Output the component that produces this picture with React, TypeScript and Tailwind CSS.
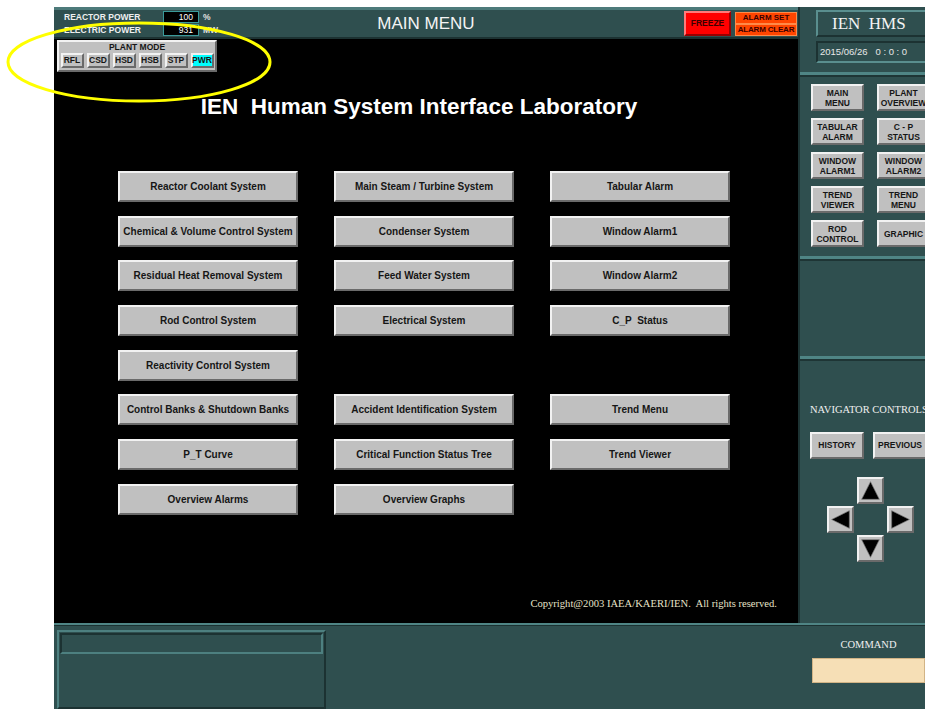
import React from "react";

const sans = "font-['Liberation_Sans',Arial,sans-serif]";
const serif = "font-['Liberation_Serif','Times_New_Roman',serif]";

const raised =
  "border-2 border-t-[#f2f2f2] border-l-[#f2f2f2] border-r-[#6a6a6a] border-b-[#6a6a6a] bg-[#c0c0c0]";

const menuRows: string[][] = [
  ["Reactor Coolant System", "Main Steam / Turbine System", "Tabular Alarm"],
  ["Chemical & Volume Control System", "Condenser System", "Window Alarm1"],
  ["Residual Heat Removal System", "Feed Water System", "Window Alarm2"],
  ["Rod Control System", "Electrical System", "C_P  Status"],
  ["Reactivity Control System", "", ""],
  ["Control Banks & Shutdown Banks", "Accident Identification System", "Trend Menu"],
  ["P_T Curve", "Critical Function Status Tree", "Trend Viewer"],
  ["Overview Alarms", "Overview Graphs", ""],
];

const sideButtons: [string, string][] = [
  ["MAIN", "MENU"],
  ["PLANT", "OVERVIEW"],
  ["TABULAR", "ALARM"],
  ["C - P", "STATUS"],
  ["WINDOW", "ALARM1"],
  ["WINDOW", "ALARM2"],
  ["TREND", "VIEWER"],
  ["TREND", "MENU"],
  ["ROD", "CONTROL"],
  ["GRAPHIC", ""],
];

const plantModes = ["RFL", "CSD", "HSD", "HSB", "STP", "PWR"];

function MenuButton({ label }: { label: string }) {
  if (!label) return <div />;
  return (
    <div
      className={`${raised} flex h-[31px] items-center justify-center text-[10px] font-bold whitespace-pre text-[#161616]`}
    >
      {label}
    </div>
  );
}

function SideButton({ top, bottom }: { top: string; bottom: string }) {
  return (
    <div
      className={`${raised} flex h-[27px] w-[53px] flex-col items-center justify-center text-[8.5px] leading-[10px] font-bold whitespace-nowrap text-[#161616]`}
    >
      <span>{top}</span>
      {bottom && <span>{bottom}</span>}
    </div>
  );
}

function Divider() {
  return (
    <div className="flex flex-col">
      <div className="h-[3px] bg-[#4f8585]" />
      <div className="h-[2px] bg-[#1e3535]" />
    </div>
  );
}

function ArrowButton({ dir }: { dir: "up" | "down" | "left" | "right" }) {
  const points = {
    up: "13,3 23,23 3,23",
    down: "3,3 23,3 13,23",
    left: "3,13 23,3 23,23",
    right: "3,3 23,13 3,23",
  }[dir];
  return (
    <div className={`${raised} flex h-[27px] w-[27px] items-center justify-center`}>
      <svg width="23" height="23" viewBox="0 0 26 26">
        <polygon points={points} fill="#000" stroke="#7a7a7a" strokeWidth="0.8" />
      </svg>
    </div>
  );
}

function PowerRow({ label, value, unit }: { label: string; value: string; unit: string }) {
  return (
    <div className="flex h-[13px] items-center">
      <span className="w-[99px] text-[8.5px] font-bold text-[#f0f0f0]">{label}</span>
      <span className="flex h-[12px] w-[36px] items-center justify-end border border-[#3a9a9a] bg-black pr-[5px] text-[8.5px] text-white">
        {value}
      </span>
      <span className="pl-[4px] text-[8.5px] font-bold text-[#e0e0e0]">{unit}</span>
    </div>
  );
}

function Header() {
  return (
    <div className="grid h-[32px] grid-cols-[1fr_auto_1fr] items-center border-t-[3px] border-b-2 border-t-[#4d7a7a] border-b-[#1c3232] bg-[#2f4f4f]">
      <div className="flex flex-col pl-[10px]">
        <PowerRow label="REACTOR POWER" value="100" unit="%" />
        <PowerRow label="ELECTRIC POWER" value="931" unit="MW" />
      </div>
      <div className="text-[17px] text-[#f4f4f4]">MAIN MENU</div>
      <div className="flex items-center justify-end gap-[4px] pr-[1px]">
        <div className="flex h-[25px] w-[47px] items-center justify-center border-2 border-t-[#ff7a7a] border-l-[#ff7a7a] border-r-[#9a0000] border-b-[#9a0000] bg-[#ff0000] text-[8.5px] font-bold text-[#3a0000]">
          FREEZE
        </div>
        <div className="flex w-[62px] flex-col text-[8px] font-bold whitespace-nowrap text-[#3a0000]">
          <div className="flex h-[12px] items-center justify-center border border-[#ff8a4a] bg-[#ff4500]">
            ALARM SET
          </div>
          <div className="flex h-[12px] items-center justify-center border border-[#ff8a4a] bg-[#ff4500] tracking-[-0.2px]">
            ALARM CLEAR
          </div>
        </div>
      </div>
    </div>
  );
}

function PlantMode() {
  return (
    <div className={`${raised} ml-[3px] mt-[1px] flex w-[160px] flex-col items-center pb-[2px]`}>
      <div className="text-[8.5px] leading-[11px] font-bold text-[#161616]">PLANT MODE</div>
      <div className="flex gap-[3px]">
        {plantModes.map((m) => (
          <div
            key={m}
            className={`flex h-[15px] w-[23px] items-center justify-center border-2 border-t-[#f2f2f2] border-l-[#f2f2f2] border-r-[#6a6a6a] border-b-[#6a6a6a] text-[8.5px] font-bold text-[#161616] ${
              m === "PWR" ? "bg-[#00ffff]" : "bg-[#c0c0c0]"
            }`}
          >
            {m}
          </div>
        ))}
      </div>
    </div>
  );
}

function MainArea() {
  return (
    <div className="flex flex-1 flex-col bg-black">
      <PlantMode />
      <div className="mt-[22px] pr-[14px] text-center text-[22.5px] leading-[26px] font-bold whitespace-pre text-white">
        IEN  Human System Interface Laboratory
      </div>
      <div className="mt-[51px] grid grid-cols-[180px_180px_180px] gap-x-[36px] gap-y-[13.7px] pl-[64px]">
        {menuRows.flat().map((label, i) => (
          <MenuButton key={i} label={label} />
        ))}
      </div>
      <div
        className={`${serif} mt-auto pr-[21px] pb-[13px] text-right text-[10.6px] leading-[12px] text-[#e6e2c8]`}
      >
        Copyright@2003 IAEA/KAERI/IEN.&nbsp; All rights reserved.
      </div>
    </div>
  );
}

function SidePanel() {
  return (
    <div className="flex w-[127px] flex-col overflow-hidden border-l-2 border-l-[#1c3232] bg-[#2f4f4f]">
      <div className="flex h-[65px] flex-col gap-[4px] pt-[3px] pl-[16px]">
        <div
          className={`${serif} flex h-[27px] w-[115px] items-center pl-[14px] text-[17px] whitespace-pre text-[#f4f4f4] border-2 border-t-[#5a8f8f] border-l-[#5a8f8f] border-r-[#1c3232] border-b-[#1c3232]`}
        >
          IEN  HMS
        </div>
        <div className="flex h-[22px] w-[115px] items-center pl-[2px] text-[9.5px] whitespace-pre text-[#e8e8e8] border-2 border-t-[#1c3232] border-l-[#1c3232] border-r-[#5a8f8f] border-b-[#5a8f8f]">
          2015/06/26{"   "}0 : 0 : 0
        </div>
      </div>
      <Divider />
      <div className="grid h-[179px] w-[140px] grid-cols-[53px_53px] content-start gap-x-[13px] gap-y-[7px] pt-[7px] pl-[11px]">
        {sideButtons.map(([a, b], i) => (
          <SideButton key={i} top={a} bottom={b} />
        ))}
      </div>
      <Divider />
      <div className="h-[95px]" />
      <Divider />
      <div
        className={`${serif} mt-[43px] pl-[10px] text-[10.5px] leading-[12px] whitespace-nowrap text-[#f0f0f0]`}
      >
        NAVIGATOR CONTROLS
      </div>
      <div className="mt-[16px] flex w-[140px] gap-[9px] pl-[10px] text-[8.5px] font-bold text-[#161616]">
        <div className={`${raised} flex h-[27px] w-[54px] items-center justify-center`}>HISTORY</div>
        <div className={`${raised} flex h-[27px] w-[54px] items-center justify-center`}>PREVIOUS</div>
      </div>
      <div className="mt-[18px] grid grid-cols-[27px_27px_27px] gap-x-[3px] gap-y-[2px] pl-[27px]">
        <div />
        <ArrowButton dir="up" />
        <div />
        <ArrowButton dir="left" />
        <div />
        <ArrowButton dir="right" />
        <div />
        <ArrowButton dir="down" />
        <div />
      </div>
    </div>
  );
}

function BottomPanel() {
  return (
    <div className="flex h-[86px] border-t-2 border-t-[#4f8585] bg-[#2f4f4f]">
      <div className="flex flex-1 flex-col border-t border-t-[#1c3232] pt-[4px] pl-[3px]">
        <div className="flex h-[79px] w-[269px] flex-col border-2 border-t-[#4d8080] border-l-[#4d8080] border-r-[#1c3232] border-b-[#1c3232] p-[1px]">
          <div className="h-[21px] border-2 border-t-[#1c3232] border-l-[#1c3232] border-r-[#4d8080] border-b-[#4d8080]" />
        </div>
      </div>
      <div className="flex w-[113px] flex-col border-t border-t-[#1c3232] pt-[12px]">
        <div className={`${serif} text-center text-[10.5px] leading-[14px] text-[#f0f0f0]`}>COMMAND</div>
        <div className="mt-[6px] h-[25px] border border-[#d2b486] bg-[#f6dfb6]" />
      </div>
    </div>
  );
}

export default function App() {
  return (
    <div className={`${sans} relative h-[709px] w-[925px] overflow-hidden bg-white pt-[7px] pl-[54px]`}>
      <div className="flex h-[702px] flex-col">
        <div className="flex h-[616px]">
          <div className="flex w-[744px] flex-col">
            <Header />
            <MainArea />
          </div>
          <SidePanel />
        </div>
        <BottomPanel />
      </div>
      <svg className="absolute top-[18px] left-[4px]" width="272" height="90" viewBox="0 0 272 90">
        <ellipse cx="135" cy="44" rx="131" ry="39" fill="none" stroke="#ffff00" strokeWidth="3" />
      </svg>
    </div>
  );
}
